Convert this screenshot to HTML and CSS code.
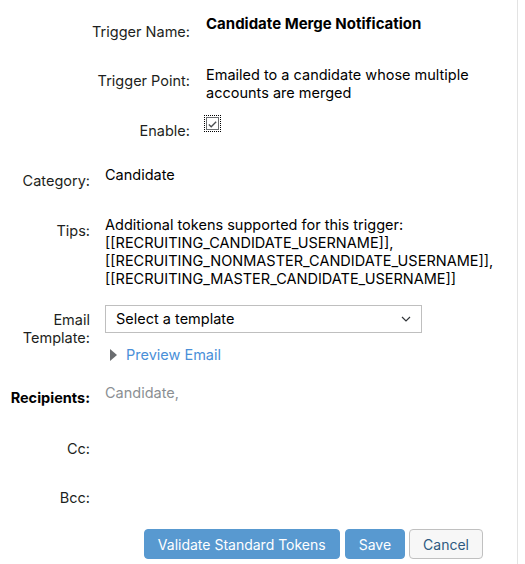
FILE: index.html
```html
<!DOCTYPE html>
<html>
<head>
<meta charset="utf-8">
<link rel="stylesheet" href="styles.css">
</head>
<body>
<div class="page">
  <div class="form">
    <div class="table top">
      <div class="row r-name">
        <div class="label lab-8">Trigger Name:</div>
        <div class="value title">Candidate Merge Notification</div>
      </div>
      <div class="row r-point">
        <div class="label">Trigger Point:</div>
        <div class="value">Emailed to a candidate whose multiple<br>accounts are merged</div>
      </div>
      <div class="row r-enable">
        <div class="label lab-7">Enable:</div>
        <div class="value">
          <span class="check-focus">
            <span class="check">
              <svg width="12" height="12" viewBox="0 0 12 12"><path d="M2 6.5 L4.6 9 L10 3.5" fill="none" stroke="#4a4d50" stroke-width="1.4"/></svg>
            </span>
          </span>
        </div>
      </div>
    </div>

    <div class="table bottom">
      <div class="row r-cat">
        <div class="label">Category:</div>
        <div class="value">Candidate</div>
      </div>
      <div class="row r-tips">
        <div class="label">Tips:</div>
        <div class="value">Additional tokens supported for this trigger:<br>[[RECRUITING_CANDIDATE_USERNAME]],<br>[[RECRUITING_NONMASTER_CANDIDATE_USERNAME]],<br>[[RECRUITING_MASTER_CANDIDATE_USERNAME]]</div>
      </div>
      <div class="row r-template">
        <div class="label">Email<br>Template:</div>
        <div class="value">
          <div class="select">
            <span>Select a template</span>
            <svg width="10" height="6" viewBox="0 0 10 6"><path d="M1 1 L5 5 L9 1" fill="none" stroke="#32363a" stroke-width="1.2"/></svg>
          </div>
          <div class="preview">
            <span class="tri"></span>
            <a class="link">Preview Email</a>
          </div>
        </div>
      </div>
      <div class="row r-recip">
        <div class="label bold lab-5">Recipients:</div>
        <div class="value muted">Candidate,</div>
      </div>
      <div class="row r-cc">
        <div class="label">Cc:</div>
        <div class="value"></div>
      </div>
      <div class="row r-bcc">
        <div class="label">Bcc:</div>
        <div class="value"></div>
      </div>
    </div>

    <div class="buttons">
      <button class="btn primary">Validate Standard Tokens</button>
      <button class="btn primary save">Save</button>
      <button class="btn secondary">Cancel</button>
    </div>
  </div>
  <div class="divider"></div>
</div>
</body>
</html>
```

FILE: styles.css
```css
html, body {
  margin: 0;
  padding: 0;
  background: #ffffff;
}
body {
  font-family: Inter, "Liberation Sans", Arial, sans-serif;
  font-size: 14.5px;
  line-height: 18px;
  color: #000000;
}
.page {
  display: flex;
  height: 564px;
}
.form {
  width: 517px;
  padding-top: 15px;
  box-sizing: border-box;
}
.divider {
  width: 1px;
  background: #e3e3e3;
}
.table {
  display: flex;
  flex-direction: column;
}
.row {
  display: grid;
  align-items: start;
}
.top .row {
  grid-template-columns: 190px 1fr;
  column-gap: 16px;
}
.bottom .row {
  grid-template-columns: 90px 1fr;
  column-gap: 15px;
}
.label {
  text-align: right;
  color: #1d1f21;
  padding-top: 6px;
}
.lab-8 { padding-top: 8px; }
.lab-7 { padding-top: 7px; }
.lab-5 { padding-top: 5px; }
.label.bold {
  font-weight: bold;
  color: #000;
}
.value {
  color: #000;
}
.title {
  font-weight: bold;
  font-size: 15px;
}
.r-point { margin-top: 25px; }
.r-enable { margin-top: 13px; }
.bottom .r-cat { margin-top: 26px; }
.r-tips { margin-top: 26px; }
.r-template { margin-top: 17px; }
.r-recip { margin-top: 20px; }
.r-cc { margin-top: 27px; }
.r-bcc { margin-top: 25px; }

.check-focus {
  display: inline-flex;
  width: 17px;
  height: 17px;
  box-sizing: border-box;
  border: 1px dotted #000;
  align-items: center;
  justify-content: center;
  margin-left: -2px;
}
.check {
  display: flex;
  width: 13px;
  height: 13px;
  box-sizing: border-box;
  border: 1px solid #6a6d70;
  background: #fff;
  align-items: center;
  justify-content: center;
}

.select {
  width: 317px;
  height: 28px;
  box-sizing: border-box;
  border: 1px solid #bfbfbf;
  display: flex;
  align-items: center;
  justify-content: space-between;
  padding: 0 10px 0 10px;
  color: #000;
}
.preview {
  display: flex;
  align-items: center;
  margin-top: 13px;
  padding-left: 5px;
  gap: 9px;
}
.tri {
  width: 0;
  height: 0;
  border-top: 6px solid transparent;
  border-bottom: 6px solid transparent;
  border-left: 7px solid #6a6d70;
}
.link {
  color: #4a8fd8;
}
.muted {
  color: #8b8f93;
}

.buttons {
  display: flex;
  justify-content: flex-end;
  padding-right: 34px;
  margin-top: 22px;
  gap: 4px;
}
.btn {
  font-family: inherit;
  font-size: 14px;
  height: 30px;
  border-radius: 4px;
  padding: 0 13px;
  cursor: pointer;
}
.primary {
  background: #5899d0;
  color: #ffffff;
  border: 1px solid #5899d0;
}
.save {
  margin-left: 1px;
}
.secondary {
  background: #f7f7f7;
  color: #2e5a80;
  border: 1px solid #c0c0c0;
}
```
